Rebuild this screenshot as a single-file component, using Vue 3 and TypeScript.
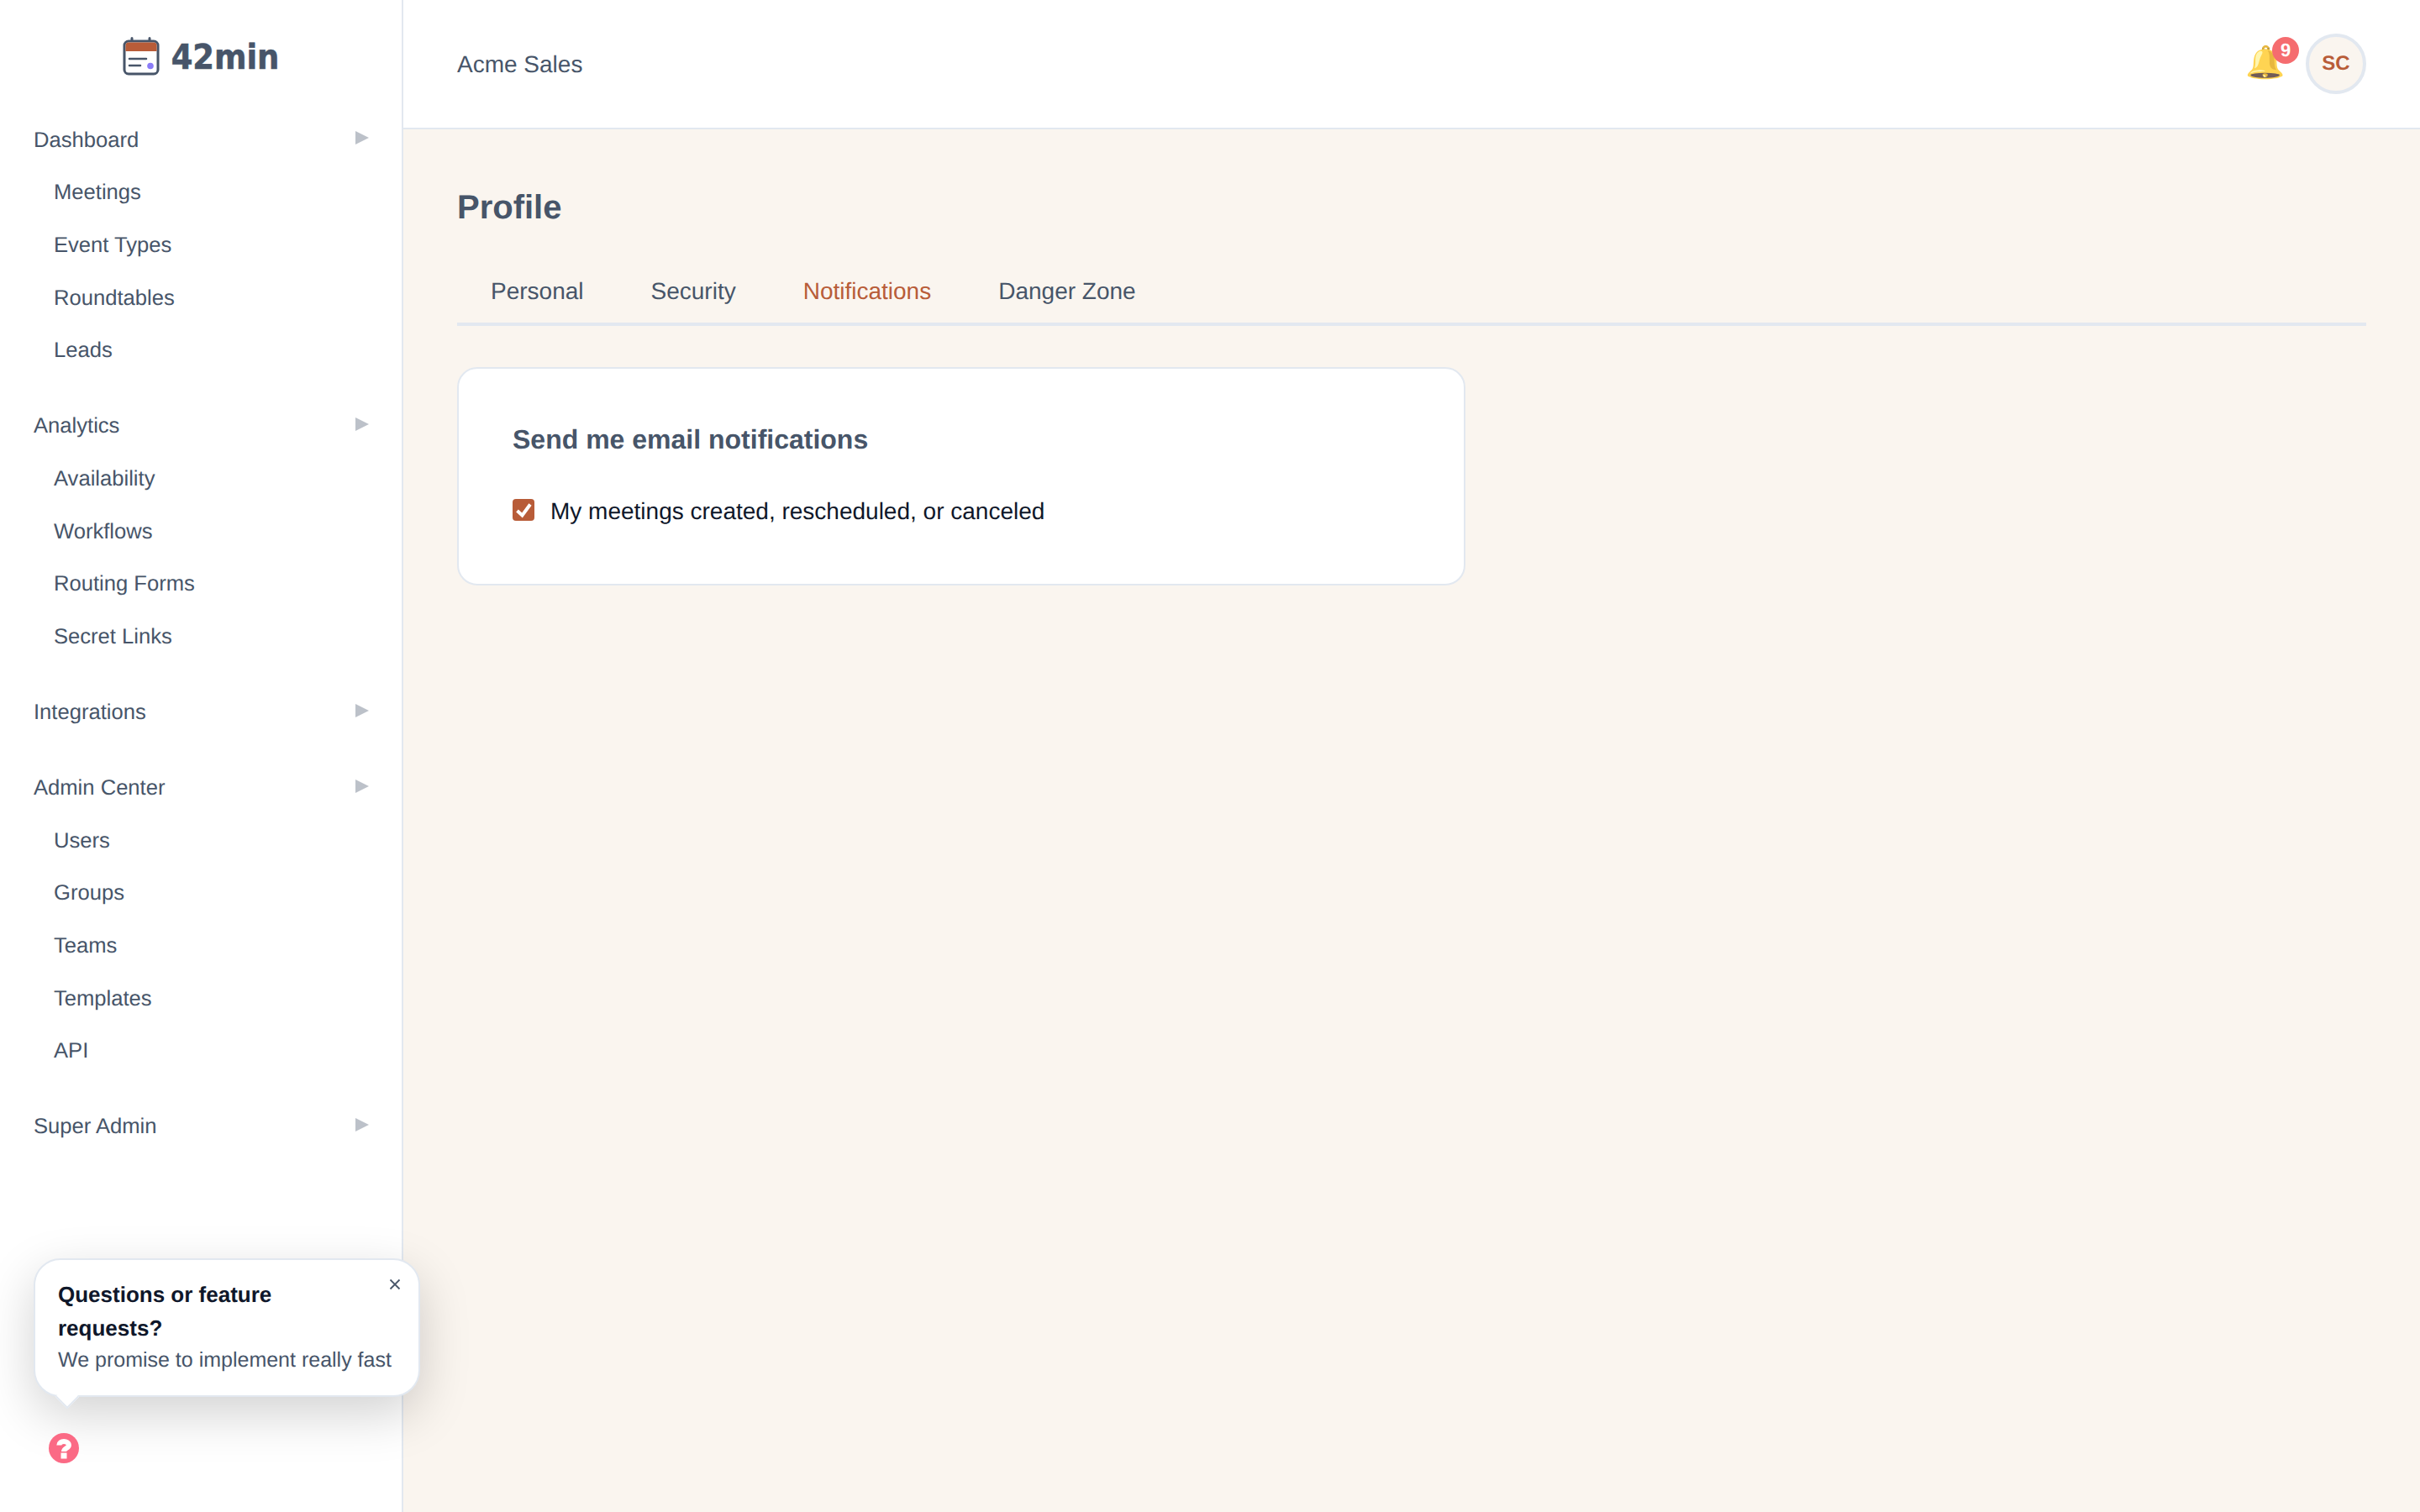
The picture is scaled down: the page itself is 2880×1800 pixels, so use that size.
<script setup lang="ts">
interface Group { label: string; children: string[] }
const groups: Group[] = [
  { label: 'Dashboard', children: ['Meetings', 'Event Types', 'Roundtables', 'Leads'] },
  { label: 'Analytics', children: ['Availability', 'Workflows', 'Routing Forms', 'Secret Links'] },
  { label: 'Integrations', children: [] },
  { label: 'Admin Center', children: ['Users', 'Groups', 'Teams', 'Templates', 'API'] },
  { label: 'Super Admin', children: [] },
]
const tabs = ['Personal', 'Security', 'Notifications', 'Danger Zone']
</script>

<template>
  <div class="app">
    <aside class="sidebar">
      <div class="logo">
        <svg class="logo-icon" viewBox="0 0 44 46" width="44" height="46">
          <path d="M11 1.500v6M32 1.500v6" stroke="#475569" stroke-width="3" stroke-linecap="round" fill="none" />
          <rect x="2" y="5" width="40" height="39" rx="5" fill="#fff" stroke="#475569" stroke-width="3" />
          <path d="M3.500 10a3.500 3.500 0 0 1 3.500-3.500h30a3.500 3.500 0 0 1 3.500 3.500v7h-37z" fill="#b85c38" />
          <path d="M8 26h20M8 34h13" stroke="#475569" stroke-width="2.500" stroke-linecap="round" fill="none" />
          <circle cx="33" cy="34.500" r="3.800" fill="#8b7cf8" />
        </svg>
        <span class="logo-text">42min</span>
      </div>
      <nav class="nav">
        <div v-for="g in groups" :key="g.label" class="group">
          <div class="group-row">
            <span>{{ g.label }}</span>
            <svg class="caret" viewBox="0 0 16 16" width="16" height="16"><path d="M0 0L16 8L0 16z" fill="#bcc1c9" /></svg>
          </div>
          <div v-for="c in g.children" :key="c" class="child-row">{{ c }}</div>
        </div>
      </nav>
    </aside>

    <div class="main">
      <header class="header">
        <span class="org">Acme Sales</span>
        <div class="header-right">
          <div class="bell">
            <span class="bell-glyph">🔔</span>
            <span class="badge">9</span>
          </div>
          <div class="avatar">SC</div>
        </div>
      </header>

      <main class="content">
        <h1 class="title">Profile</h1>
        <div class="tabs">
          <div v-for="t in tabs" :key="t" class="tab" :class="{ active: t === 'Notifications' }">{{ t }}</div>
        </div>
        <section class="card">
          <h2 class="card-title">Send me email notifications</h2>
          <div class="check-row">
            <span class="check">
              <svg viewBox="0 0 26 26" width="26" height="26"><path d="M5.500 14l6 5.500L21 6.500" stroke="#fff" stroke-width="4" fill="none" /></svg>
            </span>
            <span>My meetings created, rescheduled, or canceled</span>
          </div>
        </section>
      </main>
    </div>

    <div class="popover">
      <button class="close">
        <svg viewBox="0 0 14 14" width="14" height="14"><path d="M1.500 1.500l11 11M12.500 1.500l-11 11" stroke="#475569" stroke-width="1.800" fill="none" /></svg>
      </button>
      <div class="pop-title">Questions or feature requests?</div>
      <div class="pop-body">We promise to implement really fast</div>
      <div class="pop-tail"></div>
    </div>
    <svg class="help" viewBox="0 0 36 36" width="36" height="36">
      <circle cx="18" cy="18" r="18" fill="#fb6a85" />
      <path d="M12.300 14.500c0-3 2.600-4.500 5.700-4.500s5.900 1.600 5.900 4.500c0 3.600-5.900 3.500-5.900 7.500" stroke="#fff" stroke-width="6" fill="none" />
      <rect x="14.500" y="23.500" width="7" height="7" fill="#fff" />
    </svg>
  </div>
</template>

<style>
html, body { margin: 0; padding: 0; }
</style>

<style scoped>
.app {
  position: relative;
  display: flex;
  width: 2880px;
  height: 1800px;
  overflow: hidden;
  font-family: "Liberation Sans", Arial, sans-serif;
  text-rendering: geometricPrecision;
  color: #475569;
  background: #faf5ef;
}
.sidebar {
  width: 480px;
  flex: none;
  box-sizing: border-box;
  background: #fff;
  border-right: 2px solid #e2e8f0;
}
.logo {
  height: 134px;
  display: flex;
  align-items: center;
  justify-content: center;
  gap: 14px;
}
.logo-text {
  font-family: "DejaVu Sans Condensed", "DejaVu Sans", sans-serif;
  font-weight: 700;
  font-size: 41px;
  line-height: 1;
  margin-top: 3px;
  -webkit-text-stroke: 0.6px #475569;
}
.nav { display: flex; flex-direction: column; gap: 27.330px; padding-top: 2px; }
.group-row, .child-row {
  height: 62.670px;
  display: flex;
  align-items: center;
  font-size: 25.600px;
}
.group-row { padding: 0 40px; justify-content: space-between; }
.caret { margin-top: -6px; margin-right: -1px; }
.child-row { padding-left: 64px; }
.main { flex: 1; min-width: 0; display: flex; flex-direction: column; }
.header {
  height: 154px;
  flex: none;
  box-sizing: border-box;
  background: #fff;
  border-bottom: 2px solid #e2e8f0;
  padding: 0 64px;
  display: flex;
  align-items: center;
  justify-content: space-between;
}
.org { font-size: 28px; padding-top: 2px; }
.header-right { display: flex; align-items: center; gap: 14px; }
.bell { position: relative; width: 44px; height: 44px; margin-top: -2px; margin-right: 14px; }
.bell-glyph {
  display: block;
  font-family: "Noto Color Emoji", sans-serif;
  font-size: 38px;
  line-height: 44px;
  text-align: center;
  opacity: 0.8;
}
.badge {
  position: absolute;
  right: -20px;
  top: -9px;
  width: 32px;
  height: 32px;
  border-radius: 50%;
  background: #f56c6f;
  color: #fff;
  font-size: 22px;
  font-weight: 700;
  display: flex;
  align-items: center;
  justify-content: center;
}
.avatar {
  width: 72px;
  height: 72px;
  box-sizing: border-box;
  border-radius: 50%;
  border: 4px solid #e2e8f0;
  background: #faf5ef;
  color: #b85c38;
  font-size: 24px;
  font-weight: 700;
  display: flex;
  align-items: center;
  justify-content: center;
}
.content { padding: 64px; }
.title {
  margin: 0;
  padding-top: 1px;
  font-size: 40px;
  font-weight: 700;
  line-height: 56px;
}
.tabs {
  margin-top: 27px;
  display: flex;
  border-bottom: 4px solid #e2e8f0;
}
.tab { padding: 26px 40px 18px; font-size: 28px; line-height: 38px; }
.tab.active { color: #b85c38; }
.card {
  margin-top: 49px;
  width: 1200px;
  height: 260px;
  box-sizing: border-box;
  background: #fff;
  border: 2px solid #e2e8f0;
  border-radius: 24px;
  padding: 62px 64px;
}
.card-title { margin: 0; font-size: 32px; font-weight: 700; line-height: 44px; }
.check-row {
  margin-top: 44px;
  display: flex;
  align-items: center;
  gap: 19px;
  font-size: 28px;
  line-height: 40px;
  color: #0f172a;
}
.check {
  width: 26px;
  height: 26px;
  flex: none;
  margin-top: -4px;
  border-radius: 4px;
  background: #b85c38;
}
.check svg { display: block; }
.popover {
  position: absolute;
  left: 40px;
  top: 1498px;
  width: 460px;
  height: 165px;
  box-sizing: border-box;
  background: #fff;
  border: 2px solid #e2e8f0;
  border-radius: 32px;
  padding: 21px 27px;
  box-shadow: 0 20px 60px rgba(0, 0, 0, 0.18);
}
.pop-title { font-size: 26px; font-weight: 700; line-height: 40px; color: #0f172a; width: 300px; }
.pop-body { font-size: 25px; line-height: 37px; white-space: nowrap; }
.close {
  position: absolute;
  right: 21px;
  top: 22px;
  border: 0;
  padding: 0;
  background: none;
  display: block;
}
.close svg { display: block; }
.pop-tail {
  position: absolute;
  left: 28px;
  bottom: -12px;
  width: 20px;
  height: 20px;
  box-sizing: border-box;
  background: #fff;
  border-right: 2px solid #e2e8f0;
  border-bottom: 2px solid #e2e8f0;
  transform: rotate(45deg);
}
.help { position: absolute; left: 58px; top: 1706px; }
</style>
